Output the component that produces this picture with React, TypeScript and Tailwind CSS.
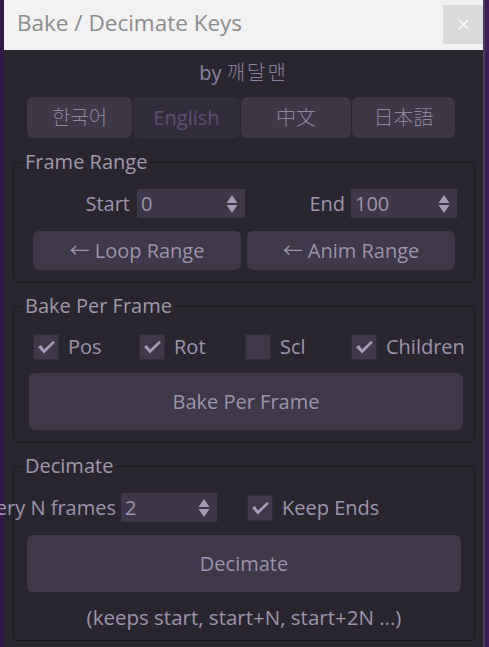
import React from "react";

const font = { fontFamily: '"Open Sans", "Noto Sans CJK KR", "Noto Sans CJK JP", sans-serif' };

function Spin({ value, width }: { value: string; width: string }) {
  return (
    <div className={`flex h-[29px] ${width} items-center bg-[#3d3747] pl-[4px] pr-[7px]`}>
      <span className="flex-1 text-[#9d94ad]">{value}</span>
      <svg width="12" height="20" viewBox="0 0 12 20">
        <polygon points="6,1 11.5,9 0.5,9" fill="#a49ab5" />
        <polygon points="0.5,11 11.5,11 6,19" fill="#a49ab5" />
      </svg>
    </div>
  );
}

function Check({ checked, label }: { checked: boolean; label: string }) {
  return (
    <div className="flex items-center gap-[9px] whitespace-nowrap">
      <div className="flex h-[26px] w-[26px] shrink-0 items-center justify-center border border-[#322d3a] bg-[#3f3849]">
        {checked && (
          <svg width="20" height="18" viewBox="0 0 20 18">
            <polygon points="2,9 5,7 8,11.5 17,3 19,4.5 8,15.5" fill="#a69bb8" />
          </svg>
        )}
      </div>
      <span className="text-[#9d94ad]">{label}</span>
    </div>
  );
}

function Group({ title, className, children }: { title: string; className: string; children: React.ReactNode }) {
  return (
    <fieldset className={`ml-[9px] mr-[8px] rounded-[4px] border border-[#1d1a22] ${className}`}>
      <legend className="ml-[8px] px-[3px] leading-[24px] text-[#a099ab]">{title}</legend>
      {children}
    </fieldset>
  );
}

export default function App() {
  return (
    <div className="flex h-[647px] w-[489px] overflow-hidden bg-[#3e1e56] text-[20px] leading-[24px]" style={font}>
      <div className="w-[4px] shrink-0 bg-[#33184a]" />
      <div className="flex w-[479px] shrink-0 flex-col bg-[#2a2630]">
        <div className="flex h-[50px] shrink-0 items-start bg-[#f2f2f2]">
          <span className="ml-[13px] mt-[8px] text-[22.5px] leading-[30px] text-[#8c8c8c]">Bake / Decimate Keys</span>
          <div className="ml-auto mt-[5px] flex h-[39px] w-[40px] items-center justify-center bg-[#dadada]">
            <svg width="11" height="11" viewBox="0 0 11 11">
              <path d="M1 1 L10 10 M10 1 L1 10" stroke="#ffffff" strokeWidth="1.4" />
            </svg>
          </div>
        </div>

        <div className="mt-[11px] text-center text-[20px] leading-[24px] text-[#8b82a0]">
          by <span className="font-light tracking-[2px]">깨달맨</span>
        </div>

        <div className="ml-[23px] mt-[12px] flex gap-[1px]">
          <button className="h-[41px] w-[105px] rounded-[6px] bg-[#3d3746] font-light text-[#8e859e]">한국어</button>
          <button className="h-[41px] w-[107px] rounded-[6px] bg-[#332e3c] text-[#5d4f73]">English</button>
          <button className="h-[41px] w-[110px] rounded-[6px] bg-[#3d3746] font-light text-[#8e859e]">中文</button>
          <button className="h-[41px] w-[103px] rounded-[6px] bg-[#3d3746] font-light text-[#8e859e]">日本語</button>
        </div>

        <Group title="Frame Range" className="mt-[12px] pb-[12px]">
          <div className="mt-[15px] grid grid-cols-2 gap-x-[6px] pl-[25px] pr-[17px]">
            <div className="flex items-center justify-end gap-[7px]">
              <span className="text-[#9d94ad]">Start</span>
              <Spin value="0" width="w-[108px]" />
            </div>
            <div className="flex items-center justify-end gap-[6px]">
              <span className="text-[#9d94ad]">End</span>
              <Spin value="100" width="w-[106px]" />
            </div>
          </div>
          <div className="mt-[13px] grid grid-cols-2 gap-x-[6px] px-[19px]">
            <button className="h-[39px] rounded-[6px] bg-[#3e3848] text-[#9d94ad]">← Loop Range</button>
            <button className="h-[39px] rounded-[6px] bg-[#3e3848] text-[#9d94ad]">← Anim Range</button>
          </div>
        </Group>

        <Group title="Bake Per Frame" className="mt-[11px] pb-[12px]">
          <div className="mt-[16px] grid w-[443px] grid-cols-4 pl-[19px]">
            <Check checked label="Pos" />
            <Check checked label="Rot" />
            <Check checked={false} label="Scl" />
            <Check checked label="Children" />
          </div>
          <button className="ml-[15px] mr-[11px] mt-[13px] h-[57px] w-[434px] rounded-[6px] bg-[#3e3848] text-[#9d94ad]">
            Bake Per Frame
          </button>
        </Group>

        <Group title="Decimate" className="mt-[11px] pb-[11px]">
          <div className="mt-[15px] flex items-center">
            <div className="flex w-[102px] justify-end whitespace-nowrap text-[#9d94ad]">Every N frames</div>
            <div className="ml-[5px]">
              <Spin value="2" width="w-[96px]" />
            </div>
            <div className="ml-[30px]">
              <Check checked label="Keep Ends" />
            </div>
          </div>
          <button className="ml-[13px] mt-[13px] h-[57px] w-[434px] rounded-[6px] bg-[#3e3848] text-[#9d94ad]">
            Decimate
          </button>
          <div className="mt-[13px] text-center text-[20.5px] leading-[24px] text-[#9d94ad]">(keeps start, start+N, start+2N ...)</div>
        </Group>
      </div>
      <div className="w-[2px] shrink-0 bg-[#4b3b5c]" />
    </div>
  );
}
